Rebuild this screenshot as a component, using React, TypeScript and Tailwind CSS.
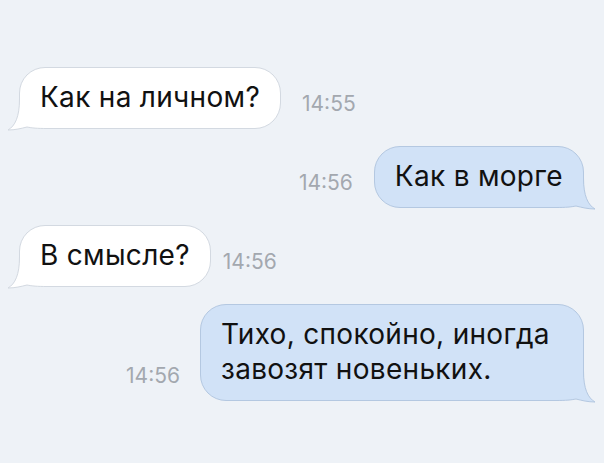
import type { ReactNode } from "react";
import clsx from "clsx";

type Side = "in" | "out";

const palette = {
  in: { fill: "#ffffff", stroke: "#d3d9e1" },
  out: { fill: "#d1e2f7", stroke: "#b4c8e1" },
};

/** Little curled tail at the bottom corner of a bubble. */
function Tail({ side }: { side: Side }) {
  const { fill, stroke } = palette[side];
  return (
    <svg
      width={40}
      height={36}
      viewBox="0 0 40 36"
      className={clsx(
        "absolute bottom-[-3px]",
        side === "in" ? "left-[-13px]" : "right-[-13px]"
      )}
    >
      <g transform={side === "out" ? "matrix(-1 0 0 1 40 0)" : undefined}>
        <path
          d="M12.5 0 V4 C12.5 22 8 31 1 35 C8 35 14 33.5 20 32 C25 33 30 33.5 40 33.5 V0 Z"
          fill={fill}
        />
        <path
          d="M12.5 0 V4 C12.5 22 8 31 1 35 C8 35 14 33.5 20 32 C25 33 30 33.5 40 33.5"
          fill="none"
          stroke={stroke}
          strokeWidth={1}
        />
      </g>
    </svg>
  );
}

function Bubble({ side, children }: { side: Side; children: ReactNode }) {
  return (
    <div
      className={clsx(
        "relative rounded-[26px] border px-5 pt-3 pb-[13px] text-[28px] leading-[35px] tracking-[0.3px] text-[#111]",
        side === "in"
          ? "border-[#d3d9e1] bg-white"
          : "border-[#b4c8e1] bg-[#d1e2f7]"
      )}
    >
      <Tail side={side} />
      <span className="relative block">{children}</span>
    </div>
  );
}

function Time({ children }: { children: ReactNode }) {
  return (
    <span className="mb-[15px] text-[21px] leading-[20px] text-[#a3a8af]">
      {children}
    </span>
  );
}

export default function App() {
  return (
    <div className="flex h-[463px] w-full flex-col gap-[17px] overflow-hidden bg-[#eef2f7] pt-[67px] pr-[20px] pl-[19px] font-['Inter','Liberation_Sans',sans-serif]">
      <div className="flex items-end gap-[21px]">
        <Bubble side="in">Как на личном?</Bubble>
        <Time>14:55</Time>
      </div>

      <div className="flex items-end justify-end gap-[21px]">
        <Time>14:56</Time>
        <Bubble side="out">Как в морге</Bubble>
      </div>

      <div className="flex items-end gap-[12px]">
        <Bubble side="in">В смысле?</Bubble>
        <Time>14:56</Time>
      </div>

      <div className="flex items-end justify-end gap-[20px]">
        <Time>14:56</Time>
        <Bubble side="out">
          <span className="block max-w-[342px]">
            Тихо, спокойно, иногда завозят новеньких.
          </span>
        </Bubble>
      </div>
    </div>
  );
}
